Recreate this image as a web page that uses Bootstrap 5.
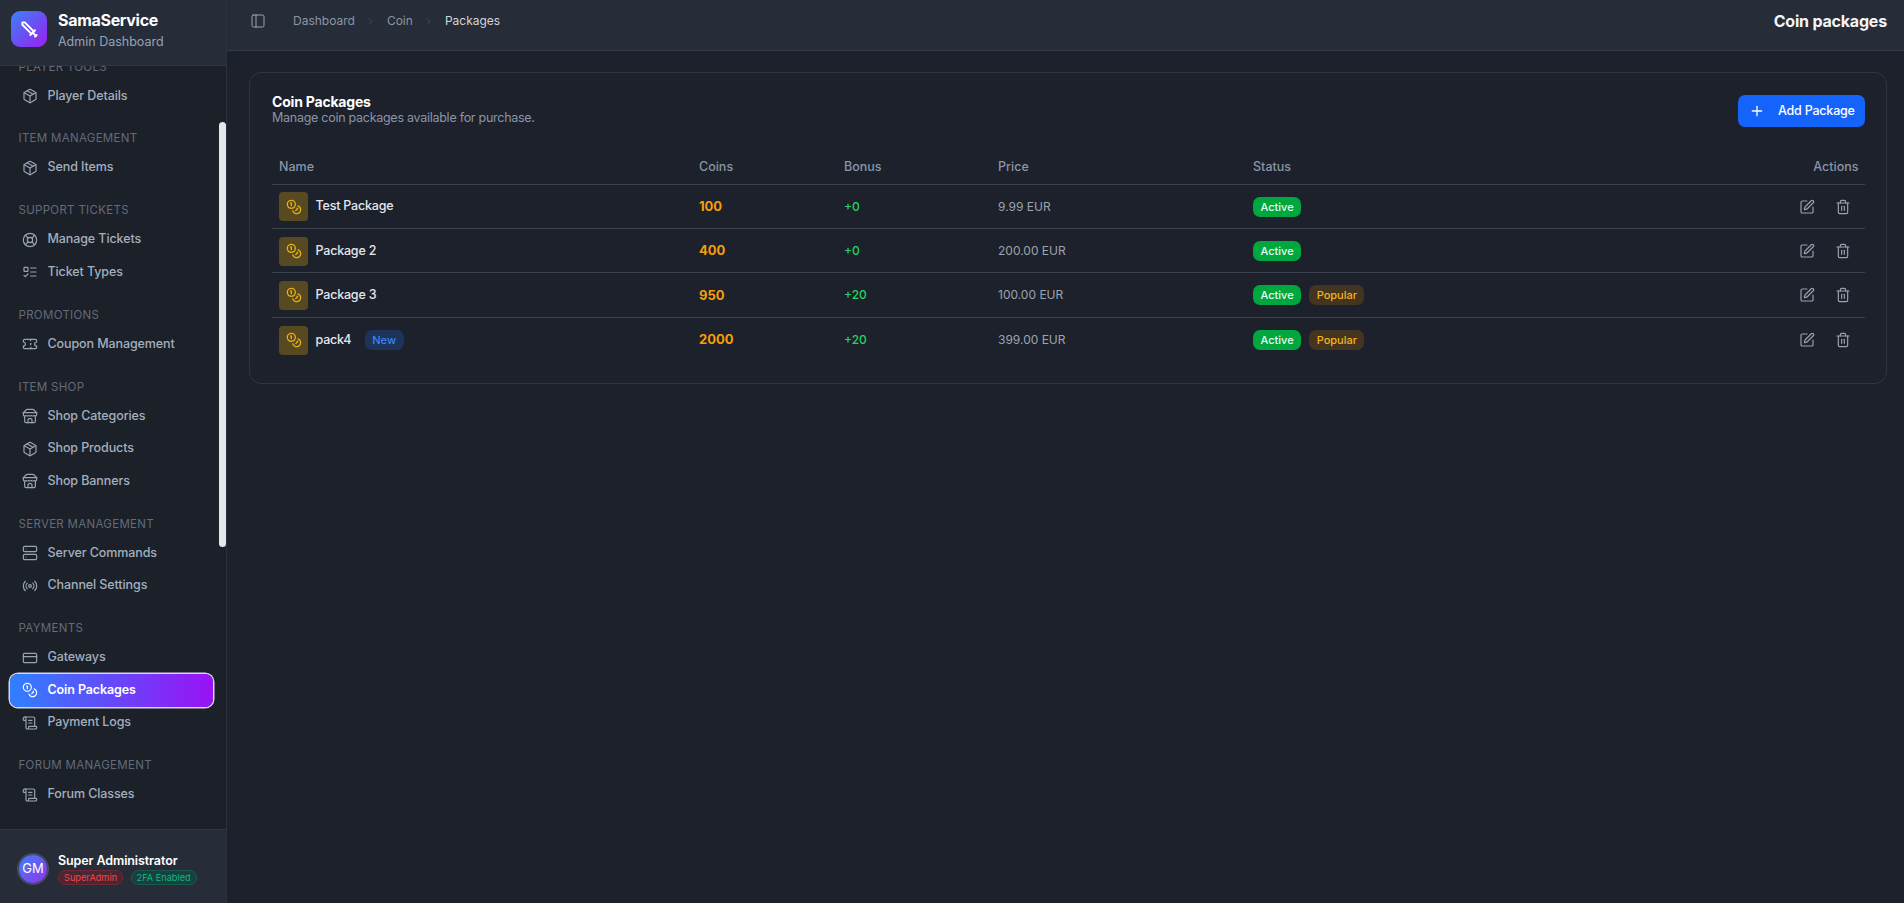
<!DOCTYPE html>
<html lang="en">
  <head>
    <meta charset="UTF-8" />
    <meta name="viewport" content="width=device-width, initial-scale=1" />
    <title>Coin packages</title>
    <link href="https://cdn.jsdelivr.net/npm/bootstrap@5.3.0/dist/css/bootstrap.min.css" rel="stylesheet" />
    <style>
      body {
        font-family: Inter, "Liberation Sans", sans-serif;
        font-size: 12.5px;
        background: #1c212b;
        color: #e5e7eb;
        height: 903px;
        overflow: hidden;
      }
      .ico {
        width: 16px;
        height: 16px;
        flex-shrink: 0;
        fill: none;
        stroke: currentColor;
        stroke-width: 2;
        stroke-linecap: round;
        stroke-linejoin: round;
      }

      /* sidebar */
      .side {
        width: 227px;
        height: 903px;
        background: #1b2029;
        border-right: 1px solid #2b313d;
        position: relative;
      }
      .brand {
        height: 65.5px;
        padding: 11px;
        gap: 11px;
        background: #262c38;
        border-bottom: 1px solid #2f3642;
      }
      .brand-logo {
        width: 36px;
        height: 36px;
        border-radius: 9px;
        background: linear-gradient(135deg, #3b82f6, #9a1ff0);
        color: #fff;
      }
      .brand-logo .ico { width: 19px; height: 19px; stroke-width: 2.4; }
      .brand-text { margin-top: -1px; }
      .brand-name { font-size: 16px; font-weight: 700; color: #fff; line-height: 20px; letter-spacing: -0.3px; }
      .brand-sub { font-size: 12.5px; color: #94a3b8; line-height: 20px; margin-top: 2px; }
      .side-scroll { overflow: hidden; }
      .side-list { margin-top: -7px; }
      .side-group { margin-bottom: 18px; }
      .side-group:first-child { margin-bottom: 17.5px; }
      .side-label {
        font-size: 11.5px;
        line-height: 16px;
        color: #636b7a;
        text-transform: uppercase;
        letter-spacing: 0.3px;
        padding-left: 18.5px;
        margin-bottom: 5.5px;
      }
      .side-link {
        height: 32.5px;
        margin: 0 13px 0 10px;
        padding-left: 12px;
        gap: 9.5px;
        color: #a3afbe;
        font-weight: 500;
        letter-spacing: -0.1px;
        border-radius: 8px;
        text-decoration: none;
      }
      .side-link .ico { color: #9aa5b4; stroke-width: 1.75; }
      .side-link.on {
        background: linear-gradient(90deg, #2f80ff, #9a12f5);
        box-shadow: 0 0 0 1.5px #d8d4ef;
        color: #fff;
        font-weight: 600;
      }
      .side-link.on .ico { color: #fff; }
      .thumb {
        position: absolute;
        right: 0;
        top: 122px;
        width: 7px;
        height: 425px;
        background: #e5e7eb;
        border-radius: 4px;
      }
      .side-foot {
        height: 74px;
        padding: 5px 0 0 19px;
        gap: 11px;
        background: #262c38;
        border-top: 1px solid #2f3642;
      }
      .avatar {
        width: 28px;
        height: 28px;
        border-radius: 50%;
        background: linear-gradient(135deg, #3b82f6, #9333ea);
        box-shadow: 0 0 0 2px #454a6c;
        color: #fff;
        font-size: 13px;
      }
      .foot-name { font-size: 12.5px; font-weight: 600; color: #fff; line-height: 16px; letter-spacing: -0.1px; margin-bottom: 1px; }
      .foot-pills { gap: 7.5px; }
      .pill {
        font-size: 9.2px;
        line-height: 13px;
        padding: 0 5px;
        border-radius: 7px;
        border: 1px solid;
      }
      .pill-red { color: #f0484f; background: #4b2530; border-color: #6b2a35; }
      .pill-green { color: #10b981; background: #17403f; border-color: #17594f; }

      /* top bar */
      .topbar {
        height: 51px;
        background: #262c38;
        border-bottom: 1px solid #343a46;
        padding: 0 17px 8px 23px;
      }
      .topbar .ico { color: #9aa5b4; stroke-width: 1.5; }
      .crumbs { margin-left: 27px; gap: 10.5px; font-size: 12px; color: #8b95a5; }
      .crumbs .chev { width: 11px; height: 11px; color: #566070; }
      .crumbs .now { color: #d1d5db; }
      .page-title { font-size: 16px; font-weight: 700; color: #f3f4f6; letter-spacing: -0.2px; }

      /* content */
      .pack-card {
        margin: 21px 17px 0 22px;
        height: 312px;
        padding: 22px 21px 22px 22px;
        background: transparent;
        border: 1px solid #2e3440;
        border-radius: 12px;
      }
      .pack-head { margin: -1px 0 1px; }
      .pack-title { font-size: 14px; font-weight: 700; color: #fff; line-height: 16px; letter-spacing: -0.2px; }
      .pack-sub { font-size: 12.5px; color: #8b95a5; line-height: 16px; letter-spacing: -0.27px; }
      .btn-add {
        width: 127px;
        height: 32px;
        padding: 0 0 0 11px;
        gap: 13px;
        font-size: 12.5px;
        font-weight: 500;
        letter-spacing: -0.2px;
        background: #1464fb;
        border: 0;
        border-radius: 7px;
      }
      .pack-table { margin: 25px 0 0; table-layout: fixed; color: #e5e7eb; --bs-table-bg: transparent; --bs-table-color: #e5e7eb; }
      .pack-table th {
        height: 32px;
        padding: 0 6.5px 0 7px;
        vertical-align: middle;
        font-weight: 500;
        color: #8b95a5;
        border-bottom: 1px solid #3a404c;
      }
      .pack-table td {
        height: 44.4px;
        padding: 1px 7px 0;
        vertical-align: middle;
        border-bottom: 1px solid #3a404c;
      }
      .pack-table tr:last-child td { border-bottom: 0; }
      .w-name { width: 419px; }
      .w-coins { width: 145px; }
      .w-bonus { width: 154px; }
      .w-price { width: 255px; }
      .pack-table th:not(.w-name), .pack-table td:not(:first-child) { padding-left: 8px; }
      .name-cell { gap: 7.5px; }
      .coin-box {
        width: 29px;
        height: 29px;
        border-radius: 4px;
        background: #574a20;
        color: #e9ae12;
      }
      .pack-name { font-weight: 500; color: #e5e7eb; letter-spacing: -0.2px; }
      .coins { font-size: 13px; font-weight: 700; color: #f59e0b; }
      .bonus { font-size: 12px; color: #24d163; font-weight: 500; }
      .price { font-size: 12px; color: #9ca3af; }
      .tag {
        font-size: 11px;
        font-weight: 500;
        line-height: 20px;
        height: 20px;
        padding: 0 7.5px;
        border-radius: 7px;
      }
      .tag-on { background: #00a63e; color: #e9fbef; }
      .tag-pop { background: #43351f; color: #f5b41a; }
      .tag-new { background: #1c345a; color: #3f83f0; margin-left: 6px; }
      .acts { gap: 20px; padding-right: 7px; color: #9ca3af; }
      .acts .ico { stroke-width: 1.75; }
    </style>
  </head>
  <body>
    <svg width="0" height="0" class="position-absolute">
      <symbol id="i-package" viewBox="0 0 24 24"><path d="m7.5 4.27 9 5.15" /><path d="M21 8a2 2 0 0 0-1-1.73l-7-4a2 2 0 0 0-2 0l-7 4A2 2 0 0 0 3 8v8a2 2 0 0 0 1 1.73l7 4a2 2 0 0 0 2 0l7-4A2 2 0 0 0 21 16Z" /><path d="m3.3 7 8.7 5 8.7-5" /><path d="M12 22V12" /></symbol>
      <symbol id="i-buoy" viewBox="0 0 24 24"><circle cx="12" cy="12" r="10" /><path d="m4.93 4.93 4.24 4.24" /><path d="m14.83 9.17 4.24-4.24" /><path d="m14.83 14.83 4.24 4.24" /><path d="m9.17 14.83-4.24 4.24" /><circle cx="12" cy="12" r="4" /></symbol>
      <symbol id="i-todo" viewBox="0 0 24 24"><rect x="3" y="5" width="6" height="6" rx="1" /><path d="m3 17 2 2 4-4" /><path d="M13 6h8" /><path d="M13 12h8" /><path d="M13 18h8" /></symbol>
      <symbol id="i-ticket" viewBox="0 0 24 24"><path d="M2 9a3 3 0 0 1 0 6v2a2 2 0 0 0 2 2h16a2 2 0 0 0 2-2v-2a3 3 0 0 1 0-6V7a2 2 0 0 0-2-2H4a2 2 0 0 0-2 2Z" /><path d="M13 5v2" /><path d="M13 17v2" /><path d="M13 11v2" /></symbol>
      <symbol id="i-store" viewBox="0 0 24 24"><path d="m2 7 4.41-4.41A2 2 0 0 1 7.83 2h8.34a2 2 0 0 1 1.42.59L22 7" /><path d="M4 12v8a2 2 0 0 0 2 2h12a2 2 0 0 0 2-2v-8" /><path d="M15 22v-4a2 2 0 0 0-2-2h-2a2 2 0 0 0-2 2v4" /><path d="M2 7h20" /><path d="M22 7v3a2 2 0 0 1-2 2a2.7 2.7 0 0 1-1.59-.63.7.7 0 0 0-.82 0A2.7 2.7 0 0 1 16 12a2.7 2.7 0 0 1-1.59-.63.7.7 0 0 0-.82 0A2.7 2.7 0 0 1 12 12a2.7 2.7 0 0 1-1.59-.63.7.7 0 0 0-.82 0A2.7 2.7 0 0 1 8 12a2.7 2.7 0 0 1-1.59-.63.7.7 0 0 0-.82 0A2.7 2.7 0 0 1 4 12a2 2 0 0 1-2-2V7" /></symbol>
      <symbol id="i-server" viewBox="0 0 24 24"><rect x="2" y="2" width="20" height="8" rx="2" /><rect x="2" y="14" width="20" height="8" rx="2" /><path d="M6 6h.01" /><path d="M6 18h.01" /></symbol>
      <symbol id="i-radio" viewBox="0 0 24 24"><path d="M4.9 19.1C1 15.2 1 8.8 4.9 4.9" /><path d="M7.8 16.2c-2.3-2.3-2.3-6.1 0-8.5" /><circle cx="12" cy="12" r="2" /><path d="M16.2 7.8c2.3 2.3 2.3 6.1 0 8.5" /><path d="M19.1 4.9C23 8.8 23 15.1 19.1 19" /></symbol>
      <symbol id="i-card" viewBox="0 0 24 24"><rect x="2" y="5" width="20" height="14" rx="2" /><path d="M2 10h20" /></symbol>
      <symbol id="i-coins" viewBox="0 0 24 24"><circle cx="8" cy="8" r="6" /><path d="M18.09 10.37A6 6 0 1 1 10.34 18" /><path d="M7 6h1v4" /><path d="m16.71 13.88.7.71-2.82 2.82" /></symbol>
      <symbol id="i-scroll" viewBox="0 0 24 24"><path d="M15 12h-5" /><path d="M15 8h-5" /><path d="M19 17V5a2 2 0 0 0-2-2H4" /><path d="M8 21h12a2 2 0 0 0 2-2v-1a1 1 0 0 0-1-1H11a1 1 0 0 0-1 1v1a2 2 0 1 1-4 0V5a2 2 0 1 0-4 0v2a1 1 0 0 0 1 1h3" /></symbol>
      <symbol id="i-panel" viewBox="0 0 24 24"><rect x="3" y="3" width="18" height="18" rx="2" /><path d="M9 3v18" /></symbol>
      <symbol id="i-chev" viewBox="0 0 24 24"><path d="m9 18 6-6-6-6" /></symbol>
      <symbol id="i-plus" viewBox="0 0 24 24"><path d="M5 12h14" /><path d="M12 5v14" /></symbol>
      <symbol id="i-pen" viewBox="0 0 24 24"><path d="M12 3H5a2 2 0 0 0-2 2v14a2 2 0 0 0 2 2h14a2 2 0 0 0 2-2v-7" /><path d="M18.375 2.625a1 1 0 0 1 3 3l-9.013 9.014a2 2 0 0 1-.853.505l-2.873.84a.5.5 0 0 1-.62-.62l.84-2.873a2 2 0 0 1 .506-.852z" /></symbol>
      <symbol id="i-trash" viewBox="0 0 24 24"><path d="M3 6h18" /><path d="M19 6v14c0 1-1 2-2 2H7c-1 0-2-1-2-2V6" /><path d="M8 6V4c0-1 1-2 2-2h4c1 0 2 1 2 2v2" /><path d="M10 11v6" /><path d="M14 11v6" /></symbol>
      <symbol id="i-sword" viewBox="0 0 24 24"><path d="M14.5 17.5 3 6V3h3l11.5 11.5" /><path d="m13 19 6-6" /><path d="m16 16 4 4" /><path d="m19 21 2-2" /></symbol>
    </svg>

    <div class="d-flex">
      <!-- Sidebar -->
      <aside class="side d-flex flex-column flex-shrink-0">
        <div class="brand d-flex align-items-start flex-shrink-0">
          <div class="brand-logo d-flex align-items-center justify-content-center">
            <svg class="ico"><use href="#i-sword" /></svg>
          </div>
          <div class="brand-text">
            <div class="brand-name">SamaService</div>
            <div class="brand-sub">Admin Dashboard</div>
          </div>
        </div>

        <nav class="side-scroll flex-grow-1">
          <div class="side-list">
            <div class="side-group">
              <div class="side-label">Player Tools</div>
              <a class="side-link d-flex align-items-center" href="#"><svg class="ico"><use href="#i-package" /></svg>Player Details</a>
            </div>
            <div class="side-group">
              <div class="side-label">Item Management</div>
              <a class="side-link d-flex align-items-center" href="#"><svg class="ico"><use href="#i-package" /></svg>Send Items</a>
            </div>
            <div class="side-group">
              <div class="side-label">Support Tickets</div>
              <a class="side-link d-flex align-items-center" href="#"><svg class="ico"><use href="#i-buoy" /></svg>Manage Tickets</a>
              <a class="side-link d-flex align-items-center" href="#"><svg class="ico"><use href="#i-todo" /></svg>Ticket Types</a>
            </div>
            <div class="side-group">
              <div class="side-label">Promotions</div>
              <a class="side-link d-flex align-items-center" href="#"><svg class="ico"><use href="#i-ticket" /></svg>Coupon Management</a>
            </div>
            <div class="side-group">
              <div class="side-label">Item Shop</div>
              <a class="side-link d-flex align-items-center" href="#"><svg class="ico"><use href="#i-store" /></svg>Shop Categories</a>
              <a class="side-link d-flex align-items-center" href="#"><svg class="ico"><use href="#i-package" /></svg>Shop Products</a>
              <a class="side-link d-flex align-items-center" href="#"><svg class="ico"><use href="#i-store" /></svg>Shop Banners</a>
            </div>
            <div class="side-group">
              <div class="side-label">Server Management</div>
              <a class="side-link d-flex align-items-center" href="#"><svg class="ico"><use href="#i-server" /></svg>Server Commands</a>
              <a class="side-link d-flex align-items-center" href="#"><svg class="ico"><use href="#i-radio" /></svg>Channel Settings</a>
            </div>
            <div class="side-group">
              <div class="side-label">Payments</div>
              <a class="side-link d-flex align-items-center" href="#"><svg class="ico"><use href="#i-card" /></svg>Gateways</a>
              <a class="side-link on d-flex align-items-center" href="#"><svg class="ico"><use href="#i-coins" /></svg>Coin Packages</a>
              <a class="side-link d-flex align-items-center" href="#"><svg class="ico"><use href="#i-scroll" /></svg>Payment Logs</a>
            </div>
            <div class="side-group">
              <div class="side-label">Forum Management</div>
              <a class="side-link d-flex align-items-center" href="#"><svg class="ico"><use href="#i-scroll" /></svg>Forum Classes</a>
            </div>
          </div>
        </nav>
        <div class="thumb"></div>

        <div class="side-foot d-flex align-items-center flex-shrink-0">
          <div class="avatar d-flex align-items-center justify-content-center flex-shrink-0">GM</div>
          <div>
            <div class="foot-name">Super Administrator</div>
            <div class="foot-pills d-flex">
              <span class="pill pill-red">SuperAdmin</span>
              <span class="pill pill-green">2FA Enabled</span>
            </div>
          </div>
        </div>
      </aside>

      <!-- Main -->
      <div class="flex-grow-1">
        <header class="topbar d-flex align-items-center">
          <svg class="ico"><use href="#i-panel" /></svg>
          <div class="crumbs d-flex align-items-center">
            <span>Dashboard</span>
            <svg class="ico chev"><use href="#i-chev" /></svg>
            <span>Coin</span>
            <svg class="ico chev"><use href="#i-chev" /></svg>
            <span class="now">Packages</span>
          </div>
          <div class="page-title ms-auto">Coin packages</div>
        </header>

        <div class="card pack-card">
          <div class="d-flex justify-content-between align-items-center">
            <div class="pack-head">
              <div class="pack-title">Coin Packages</div>
              <div class="pack-sub">Manage coin packages available for purchase.</div>
            </div>
            <button class="btn btn-primary btn-add d-flex align-items-center" type="button">
              <svg class="ico"><use href="#i-plus" /></svg>Add Package
            </button>
          </div>

          <table class="table pack-table">
            <thead>
              <tr>
                <th class="w-name">Name</th>
                <th class="w-coins">Coins</th>
                <th class="w-bonus">Bonus</th>
                <th class="w-price">Price</th>
                <th>Status</th>
                <th class="text-end">Actions</th>
              </tr>
            </thead>
            <tbody>
              <tr>
                <td><div class="name-cell d-flex align-items-center"><span class="coin-box d-flex align-items-center justify-content-center"><svg class="ico"><use href="#i-coins" /></svg></span><span class="pack-name">Test Package</span></div></td>
                <td class="coins">100</td>
                <td class="bonus">+0</td>
                <td class="price">9.99 EUR</td>
                <td><div class="d-flex gap-2"><span class="tag tag-on">Active</span></div></td>
                <td><div class="acts d-flex justify-content-end"><svg class="ico"><use href="#i-pen" /></svg><svg class="ico"><use href="#i-trash" /></svg></div></td>
              </tr>
              <tr>
                <td><div class="name-cell d-flex align-items-center"><span class="coin-box d-flex align-items-center justify-content-center"><svg class="ico"><use href="#i-coins" /></svg></span><span class="pack-name">Package 2</span></div></td>
                <td class="coins">400</td>
                <td class="bonus">+0</td>
                <td class="price">200.00 EUR</td>
                <td><div class="d-flex gap-2"><span class="tag tag-on">Active</span></div></td>
                <td><div class="acts d-flex justify-content-end"><svg class="ico"><use href="#i-pen" /></svg><svg class="ico"><use href="#i-trash" /></svg></div></td>
              </tr>
              <tr>
                <td><div class="name-cell d-flex align-items-center"><span class="coin-box d-flex align-items-center justify-content-center"><svg class="ico"><use href="#i-coins" /></svg></span><span class="pack-name">Package 3</span></div></td>
                <td class="coins">950</td>
                <td class="bonus">+20</td>
                <td class="price">100.00 EUR</td>
                <td><div class="d-flex gap-2"><span class="tag tag-on">Active</span><span class="tag tag-pop">Popular</span></div></td>
                <td><div class="acts d-flex justify-content-end"><svg class="ico"><use href="#i-pen" /></svg><svg class="ico"><use href="#i-trash" /></svg></div></td>
              </tr>
              <tr>
                <td><div class="name-cell d-flex align-items-center"><span class="coin-box d-flex align-items-center justify-content-center"><svg class="ico"><use href="#i-coins" /></svg></span><span class="pack-name">pack4</span><span class="tag tag-new">New</span></div></td>
                <td class="coins">2000</td>
                <td class="bonus">+20</td>
                <td class="price">399.00 EUR</td>
                <td><div class="d-flex gap-2"><span class="tag tag-on">Active</span><span class="tag tag-pop">Popular</span></div></td>
                <td><div class="acts d-flex justify-content-end"><svg class="ico"><use href="#i-pen" /></svg><svg class="ico"><use href="#i-trash" /></svg></div></td>
              </tr>
            </tbody>
          </table>
        </div>
      </div>
    </div>

    <script src="https://cdn.jsdelivr.net/npm/bootstrap@5.3.0/dist/js/bootstrap.bundle.min.js"></script>
  </body>
</html>
